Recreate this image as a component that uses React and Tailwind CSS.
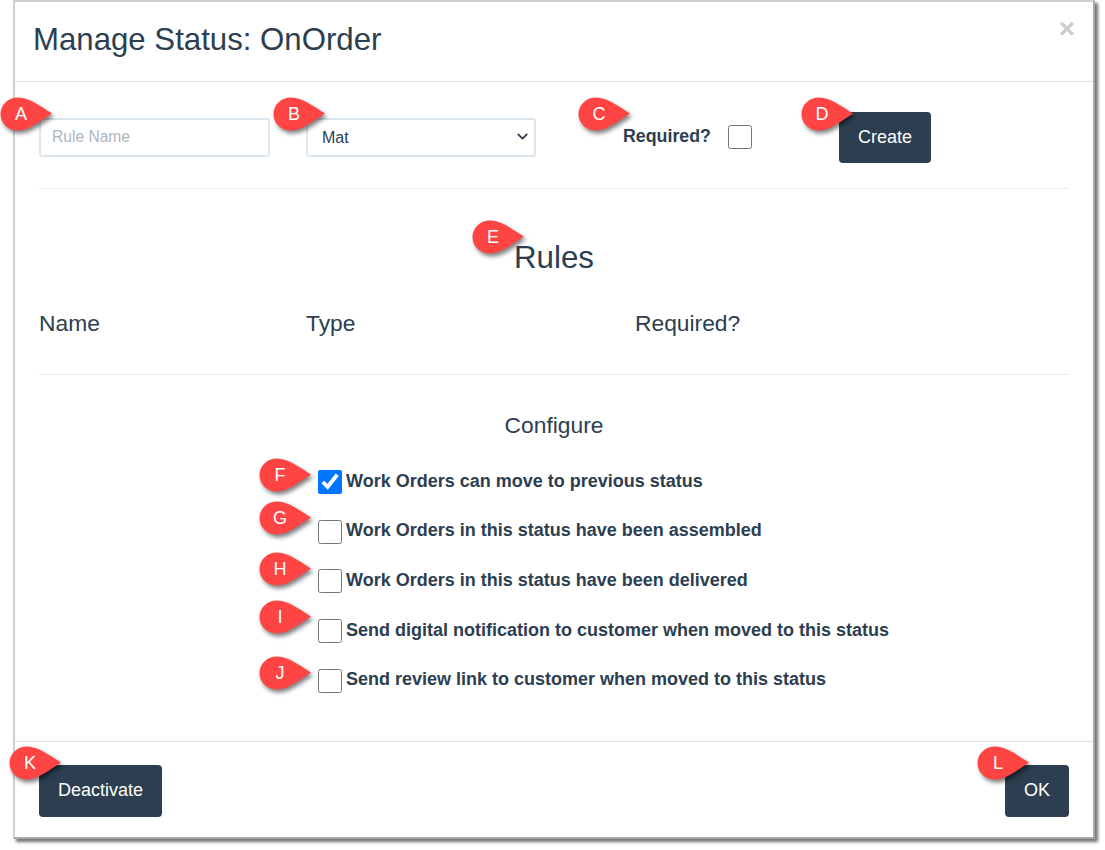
import React from 'react';
import { ChevronDown } from 'lucide-react';

const callouts = [
    { label: 'A', cls: 'left-[-15px] top-[95px]' },
    { label: 'B', cls: 'left-[258px] top-[95px]' },
    { label: 'C', cls: 'left-[563px] top-[95px]' },
    { label: 'D', cls: 'left-[786px] top-[95px]' },
    { label: 'E', cls: 'left-[457px] top-[218px]' },
    { label: 'F', cls: 'left-[244px] top-[456px]' },
    { label: 'G', cls: 'left-[244px] top-[499px]' },
    { label: 'H', cls: 'left-[244px] top-[550px]' },
    { label: 'I', cls: 'left-[244px] top-[598px]' },
    { label: 'J', cls: 'left-[244px] top-[654px]' },
    { label: 'K', cls: 'left-[-6px] top-[744px]' },
    { label: 'L', cls: 'left-[962px] top-[744px]' },
];

const configureOptions = [
    { text: 'Work Orders can move to previous status', checked: true, mt: 'mt-0', textMt: '-mt-[1px]' },
    { text: 'Work Orders in this status have been assembled', checked: false, mt: 'mt-[26px]', textMt: '-mt-[2px]' },
    { text: 'Work Orders in this status have been delivered', checked: false, mt: 'mt-[25px]', textMt: '-mt-[1px]' },
    { text: 'Send digital notification to customer when moved to this status', checked: false, mt: 'mt-[26px]', textMt: '-mt-[1px]' },
    { text: 'Send review link to customer when moved to this status', checked: false, mt: 'mt-[26px]', textMt: '-mt-[2px]' },
];

function Callout({ label, cls }) {
    return (
        <div className={`absolute w-[52px] h-[34px] ${cls}`}>
            <svg width="52" height="34" viewBox="0 0 52 34" className="absolute inset-0 overflow-visible drop-shadow-[2px_3px_2px_rgba(0,0,0,0.5)]">
                <path d="M18 0.5 C29 0.5 40 9 52 16.5 C40 24 29 33.5 18 33.5 C8 33.5 0.5 26 0.5 17 C0.5 8 8 0.5 18 0.5 Z" fill="#ff4444" />
            </svg>
            <span className="absolute left-0 top-0 w-[42px] h-[34px] flex items-center justify-center text-white text-[18px]">{label}</span>
        </div>
    );
}

function DarkButton({ children, cls }) {
    return (
        <button className={`bg-[#2c3e50] text-white text-[18px] rounded-[4px] ${cls}`}>{children}</button>
    );
}

export default function App() {
    return (
        <div className="min-h-[850px] bg-white font-['Liberation_Sans',Arial,sans-serif] text-[#2c3e50]">
            <div className="relative ml-[13px] w-[1082px] h-[839px] border-2 border-[#cfcfcf] border-r-[#a8a8a8] border-b-[#a8a8a8] bg-white shadow-[3px_3px_3px_rgba(0,0,0,0.55)]">
                {/* Header */}
                <div className="h-[80px] border-b border-[#dee2e6] pl-[18px] pr-[18px] flex items-center justify-between">
                    <h1 className="text-[31.2px] leading-none -mt-[3px]">Manage Status: OnOrder</h1>
                    <span className="text-[#cccccc] font-bold text-[28px] leading-none -mt-[26px]">×</span>
                </div>

                {/* Create rule */}
                <div className="mx-[24px]">
                    <div className="h-[107px] border-b border-[#ecedee] pt-[30px] grid grid-cols-[267px_317px_216px_1fr]">
                        <input
                            type="text"
                            placeholder="Rule Name"
                            className="w-[231px] h-[39px] mt-[6px] border-2 border-[#dce4ec] rounded-[3px] px-[11px] pb-[2px] text-[15.6px] outline-none placeholder:text-[#acb6c0]"
                        />
                        <div className="relative w-[230px] h-[39px] mt-[6px]">
                            <select className="w-full h-full appearance-none border-2 border-[#dce4ec] rounded-[3px] pl-[14px] text-[16px] bg-white">
                                <option>Mat</option>
                            </select>
                            <ChevronDown size={17} strokeWidth={2.5} className="absolute right-[5px] top-[10px] text-[#2c3e50]" />
                        </div>
                        <div className="flex items-start pt-[11px]">
                            <span className="font-bold text-[17.8px]">Required?</span>
                            <input type="checkbox" readOnly className="w-[24px] h-[24px] ml-[17px] mt-[2px]" />
                        </div>
                        <DarkButton cls="w-[92px] h-[51px]">Create</DarkButton>
                    </div>

                    {/* Rules */}
                    <div className="h-[186px] border-b border-[#ecedee]">
                        <h2 className="text-center text-[31.3px] leading-none pt-[53px]">Rules</h2>
                        <div className="grid grid-cols-[267px_329px_1fr] text-[22.8px] leading-none mt-[39px]">
                            <span>Name</span>
                            <span>Type</span>
                            <span>Required?</span>
                        </div>
                    </div>

                    {/* Configure */}
                    <div className="h-[366px]">
                        <h3 className="text-center text-[22.8px] leading-none pt-[39px]">Configure</h3>
                        <div className="ml-[279px] mt-[33px]">
                            {configureOptions.map((opt) => (
                                <div key={opt.text} className={`flex items-center h-[24px] ${opt.mt}`}>
                                    <input type="checkbox" checked={opt.checked} readOnly className="w-[24px] h-[24px] m-0 shrink-0" />
                                    <span className={`ml-[4px] font-bold text-[18px] whitespace-nowrap ${opt.textMt}`}>{opt.text}</span>
                                </div>
                            ))}
                        </div>
                    </div>
                </div>

                {/* Footer */}
                <div className="border-t border-[#dee2e6] px-[24px] pt-[23px] flex justify-between">
                    <DarkButton cls="w-[123px] h-[52px] pb-[2px]">Deactivate</DarkButton>
                    <DarkButton cls="w-[64px] h-[52px] pb-[2px]">OK</DarkButton>
                </div>

                {callouts.map((c) => (
                    <Callout key={c.label} label={c.label} cls={c.cls} />
                ))}
            </div>
        </div>
    );
}
